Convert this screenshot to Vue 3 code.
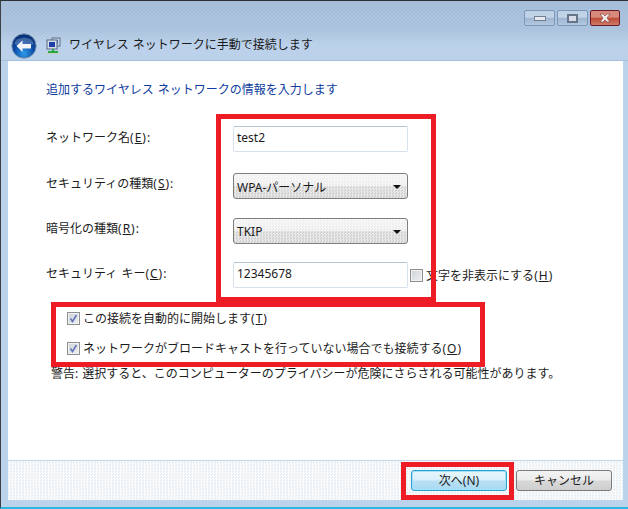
<script setup>
const fields = [
  { label: 'ネットワーク名', key: 'E', type: 'input', value: 'test2', cls: 'row-a' },
  { label: 'セキュリティの種類', key: 'S', type: 'select', value: 'WPA-パーソナル', cls: 'row-b' },
  { label: '暗号化の種類', key: 'R', type: 'select', value: 'TKIP', cls: 'row-c' },
  { label: 'セキュリティ キー', key: 'C', type: 'input', value: '12345678', cls: 'row-d', hide: true },
]
const checks = [
  { label: 'この接続を自動的に開始します', key: 'T' },
  { label: 'ネットワークがブロードキャストを行っていない場合でも接続する', key: 'O' },
]
</script>

<template>
  <div class="window">
    <header class="chrome">
      <div class="controls">
        <span class="ctl"><i class="min-glyph"></i></span>
        <span class="ctl"><i class="max-glyph"></i></span>
        <span class="ctl close">
          <svg width="14" height="10" viewBox="0 0 14 10">
            <path d="M2 1h3l2 2 2-2h3L9 5l3 4H9L7 7 5 9H2l3-4z" fill="#f2eeee" stroke="#7a3a36" stroke-width=".6" />
          </svg>
        </span>
      </div>
      <div class="nav">
        <svg class="back" width="26" height="26" viewBox="0 0 26 26">
          <defs>
            <radialGradient id="orb" cx="50%" cy="80%" r="75%">
              <stop offset="0" stop-color="#2f9be8" />
              <stop offset=".55" stop-color="#0c4aa6" />
              <stop offset="1" stop-color="#0a2f72" />
            </radialGradient>
          </defs>
          <circle cx="13" cy="13" r="12.2" fill="url(#orb)" stroke="#7f97b8" stroke-width="1" />
          <path d="M3 11a10.5 9 0 0 1 20 0c-6 2.500-14 2.500-20 0z" fill="#fff" opacity=".22" />
          <path d="M5.500 13l6-5.500v3.500h8.500v4.500h-8.500v3.500z" fill="#f4f6fa" />
        </svg>
        <svg class="net" width="16" height="18" viewBox="0 0 16 18">
          <rect x="7" y="1" width="8" height="8" fill="#c9d6e6" stroke="#5c6f8a" />
          <rect x="9" y="3" width="4" height="4" fill="#3f6fc0" />
          <rect x="2" y="3" width="10" height="9" fill="#d5dfeb" stroke="#54667f" />
          <rect x="4" y="5" width="6" height="5" fill="#1d3fa6" />
          <path d="M7 12h2v2h4v2H3v-2h4z" fill="#27a845" />
          <path d="M0 16.500h16" stroke="#c9cfb6" stroke-width="1" />
        </svg>
        <h1 class="title">ワイヤレス ネットワークに手動で接続します</h1>
      </div>
    </header>

    <main class="body">
      <h2 class="heading">追加するワイヤレス ネットワークの情報を入力します</h2>

      <div v-for="f in fields" :key="f.key" class="row" :class="f.cls">
        <span class="label">{{ f.label }}<span class="key">(<u>{{ f.key }}</u>):</span></span>
        <div v-if="f.type === 'input'" class="input">{{ f.value }}</div>
        <div v-else class="select">
          <span>{{ f.value }}</span>
          <i class="caret"></i>
        </div>
        <label v-if="f.hide" class="hide">
          <i class="box"></i>
          <span>文字を非表示にする<span class="key">(<u>H</u>)</span></span>
        </label>
      </div>

      <div class="checks">
        <label v-for="c in checks" :key="c.key" class="check">
          <i class="box">
            <svg width="9" height="9" viewBox="0 0 9 9">
              <path d="M1.500 4.500l2 3 4-6.500" fill="none" stroke="#6275b8" stroke-width="1.600" />
            </svg>
          </i>
          <span>{{ c.label }}<span class="key">(<u>{{ c.key }}</u>)</span></span>
        </label>
      </div>

      <p class="warning">警告: 選択すると、このコンピューターのプライバシーが危険にさらされる可能性があります。</p>
    </main>

    <footer class="footer">
      <button class="btn primary">次へ(N)</button>
      <button class="btn">キャンセル</button>
    </footer>

    <div class="mark mark-fields"></div>
    <div class="mark mark-checks"></div>
    <div class="mark mark-next"></div>
  </div>
</template>

<style>
html, body { margin: 0; background: #fff; }
</style>

<style scoped>
.window {
  position: relative;
  box-sizing: border-box;
  width: 628px;
  height: 509px;
  overflow: hidden;
  display: flex;
  flex-direction: column;
  padding: 2px 5px 7px 2px;
  background: #bcd3ec;
  border-top: 1px solid #2b2f36;
  border-left: 1px solid #3c4148;
  border-bottom: 2px solid #2fb6e0;
  font-family: "Noto Sans", "Noto Sans CJK JP", sans-serif;
  font-size: 12px;
  word-spacing: 1px;
  color: #1c1c1c;
}
.key { letter-spacing: 1px; }
.chrome {
  flex: none;
  height: 59px;
  margin: -2px -5px 0 -2px;
  padding: 0 8px 0 10px;
  background:
    conic-gradient(rgba(255,255,255,.07) 25%, transparent 0 50%, rgba(255,255,255,.07) 0 75%, transparent 0) 0 0 / 4px 4px,
    linear-gradient(#a2bbd7 0, #a9c1dc 28px, #b9d0ea 44px, #b9d0ea 100%);
  display: flex;
  flex-direction: column;
  border-bottom: 1px solid #a8c0dc;
}
.controls {
  display: flex;
  justify-content: flex-end;
  gap: 2px;
  padding-top: 9px;
}
.ctl {
  box-sizing: border-box;
  width: 31px;
  height: 16px;
  display: flex;
  align-items: center;
  justify-content: center;
  border: 1px solid #7f97b6;
  border-radius: 2px;
  background: linear-gradient(#bdd0e6 0, #c4d5e9 45%, #9db5d1 50%, #b4c8e0 100%);
}
.close {
  width: 30px;
  border-color: #6b1a2a;
  background: linear-gradient(#d68a7c 0, #d8897a 45%, #bd4a36 50%, #d07a66 100%);
}
.min-glyph {
  width: 10px;
  height: 3px;
  background: #e8e8ec;
  border: 1px solid #6e7f96;
}
.max-glyph {
  box-sizing: border-box;
  width: 11px;
  height: 9px;
  border: 2px solid #66758a;
  background: #d6dde6;
}
.nav {
  display: flex;
  align-items: center;
  margin-top: 6px;
  height: 28px;
}
.back { flex: none; }
.net { flex: none; margin-left: 8px; }
.title {
  margin: 0 0 2px 8px;
  font-size: 12px;
  font-weight: 400;
  color: #1a1a1a;
  line-height: 16px;
}
.body {
  flex: 1;
  min-height: 0;
  margin-left: 5px;
  background: #fff;
  padding: 0 0 0 38px;
}
.heading {
  margin: 0;
  padding-top: 21px;
  font-size: 12px;
  font-weight: 400;
  line-height: 16px;
  color: #0f3d9e;
}
.row {
  display: flex;
  align-items: center;
  height: 26px;
}
.row-a { margin-top: 28px; }
.row-b { margin-top: 21px; }
.row-c { margin-top: 19px; }
.row-d { margin-top: 18px; }
.label {
  width: 187px;
  flex: none;
  margin-top: -2px;
  line-height: 16px;
}
.row-b .label, .row-c .label { margin-top: -4px; }
.input {
  box-sizing: border-box;
  width: 175px;
  height: 26px;
  padding: 0 3px 4px;
  display: flex;
  align-items: center;
  background: #fff;
  border: 1px solid #d9e2ec;
  border-top-color: #b9c3cf;
  border-radius: 2px;
}
.select {
  box-sizing: border-box;
  width: 175px;
  height: 26px;
  padding: 1px 6px 0 3px;
  display: flex;
  align-items: center;
  justify-content: space-between;
  border: 1px solid #7d7d7d;
  border-radius: 3px;
  background:
    conic-gradient(rgba(255,255,255,.5) 25%, transparent 0 50%, rgba(255,255,255,.5) 0 75%, transparent 0) 0 0 / 3px 3px,
    linear-gradient(#f2f2f2 0, #ebebeb 48%, #d4d4d4 52%, #cfcfcf 100%);
}
.caret {
  width: 0;
  height: 0;
  border-left: 4px solid transparent;
  border-right: 4px solid transparent;
  border-top: 4px solid #111;
}
.hide {
  display: flex;
  align-items: center;
  margin-left: 2px;
  white-space: nowrap;
}
.hide span { margin-left: 3px; }
.hide .key { margin-left: 0; }
.box {
  box-sizing: border-box;
  flex: none;
  width: 13px;
  height: 13px;
  display: flex;
  align-items: center;
  justify-content: center;
  border: 1px solid #8e8f8f;
  background: linear-gradient(135deg, #cfd3d8, #eef0f2);
  box-shadow: inset 0 0 0 1px #f0f1f2;
}
.checks {
  display: flex;
  flex-direction: column;
  gap: 14px;
  margin: 22px 0 0 21px;
}
.check {
  display: flex;
  align-items: center;
  height: 16px;
  gap: 3px;
  white-space: nowrap;
}
.warning {
  margin: 10px 0 0 5px;
  line-height: 16px;
}
.footer {
  flex: none;
  height: 40px;
  margin-left: 5px;
  box-sizing: border-box;
  padding: 9px 11px 0 0;
  display: flex;
  justify-content: flex-end;
  gap: 9px;
  background:
    conic-gradient(#fbfcfd 25%, transparent 0 50%, #fbfcfd 0 75%, transparent 0) 0 0 / 3px 3px,
    #e9eef2;
  border-top: 1px solid #c5d6e8;
}
.btn {
  box-sizing: border-box;
  width: 96px;
  height: 21px;
  padding: 0;
  font: inherit;
  font-size: 12px;
  line-height: 17px;
  color: #1c1c1c;
  border: 1px solid #7a7a7a;
  border-radius: 3px;
  background: linear-gradient(#f3f3f3 0, #ebebeb 48%, #d8d8d8 52%, #cfcfcf 100%);
}
.primary {
  border-color: #2f9fd0;
  box-shadow: inset 0 0 0 1px #9fe3f8;
  background: linear-gradient(#e8f6fd 0, #d8f0fb 48%, #b8e0f5 52%, #a9d9f3 100%);
}
.mark {
  position: absolute;
  box-sizing: border-box;
  border: 5px solid #ee1c25;
}
.mark-fields { left: 215px; top: 113px; width: 220px; height: 188px; }
.mark-checks { left: 50px; top: 301px; width: 434px; height: 65px; }
.mark-next { left: 400px; top: 461px; width: 113px; height: 38px; }
</style>
